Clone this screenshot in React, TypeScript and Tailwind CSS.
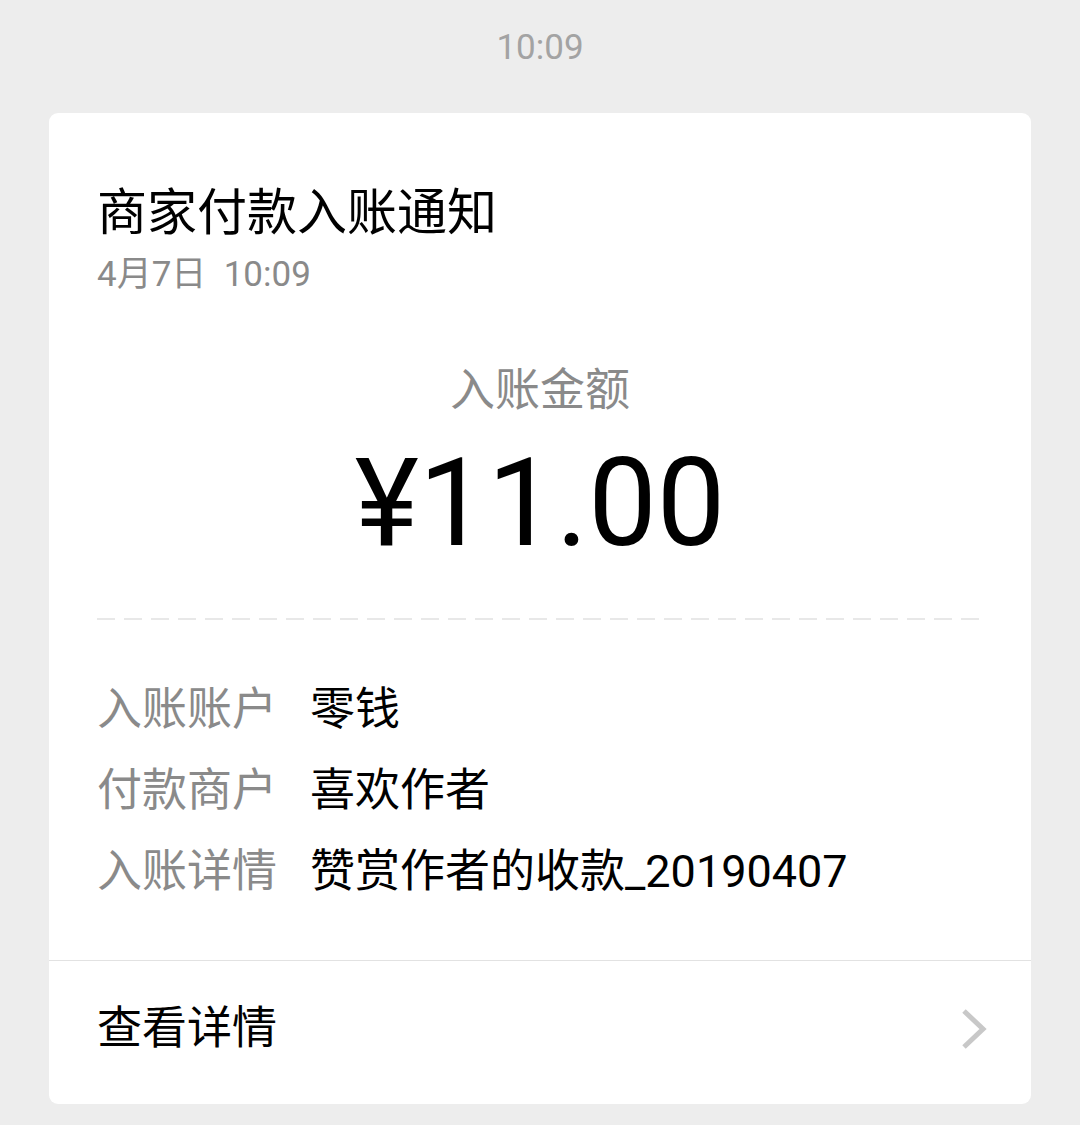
import React from "react";

const cjk = "font-['Roboto','Noto_Sans_CJK_SC',sans-serif]";

const rows = [
  { label: "入账账户", value: "零钱" },
  { label: "付款商户", value: "喜欢作者" },
  { label: "入账详情", value: "赞赏作者的收款_20190407" },
];

export default function App() {
  return (
    <div className={`min-h-[1125px] w-[1080px] bg-[#ededed] ${cjk}`}>
      <div className="pt-[28px] text-center text-[35px] leading-[40px] text-[#a3a3a3]">
        10:09
      </div>

      <div className="mx-[49px] mt-[45px] overflow-hidden rounded-[9px] bg-white">
        <div className="px-[48px] pt-[71px]">
          <div className="text-[50px] leading-[58px] text-black">商家付款入账通知</div>
          <div className="mt-[13px] text-[35px] leading-[40px] text-[#8a8a8a]">
            4月7日&nbsp;&nbsp;10:09
          </div>

          <div className="mt-[70px] text-center text-[45px] leading-[52px] text-[#8a8a8a]">
            入账金额
          </div>
          <div className="mt-[26px] text-center text-[122px] leading-[122px] text-black">
            ¥11.00
          </div>

          <div className="mt-[53px] h-[2px] bg-[linear-gradient(to_right,#e8e8e8_18px,transparent_18px)] bg-[length:27px_2px]" />

          <div className="flex flex-col gap-[29px] pb-[62px] pt-[64px]">
            {rows.map((r) => (
              <div key={r.label} className="flex text-[45px] leading-[52px]">
                <span className="w-[213px] shrink-0 text-[#8a8a8a]">{r.label}</span>
                <span className="text-black">{r.value}</span>
              </div>
            ))}
          </div>
        </div>

        <div className="h-px bg-[#e2e2e2]" />

        <div className="flex h-[143px] items-center justify-between pb-[7px] pl-[48px] pr-[43px]">
          <span className="text-[45px] leading-[52px] text-black">查看详情</span>
          <svg width="28" height="40" viewBox="0 0 28 40" fill="none">
            <path d="M4 2 L23 20 L4 38" stroke="#c8c8c8" strokeWidth="5" />
          </svg>
        </div>
      </div>
    </div>
  );
}
